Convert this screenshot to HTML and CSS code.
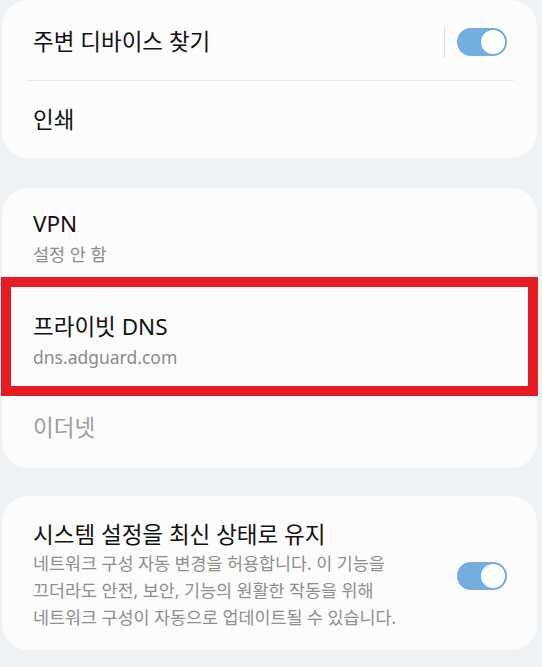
FILE: index.html
```html
<!DOCTYPE html>
<html lang="ko">
<head>
  <meta charset="UTF-8" />
  <meta name="viewport" content="width=device-width, initial-scale=1.0" />
  <title>연결 설정</title>
  <link rel="stylesheet" href="styles.css">
</head>
<body>
  <main class="page">
    <section class="card">
      <div class="row row-first">
        <div class="row-text">
          <p class="title">주변 디바이스 찾기</p>
        </div>
        <span class="vsep"></span>
        <span class="switch on"><span class="knob"></span></span>
      </div>
      <div class="divider"></div>
      <div class="row row-print">
        <div class="row-text">
          <p class="title">인쇄</p>
        </div>
      </div>
    </section>

    <section class="card">
      <div class="row row-vpn">
        <div class="row-text">
          <p class="title">VPN</p>
          <p class="sub">설정 안 함</p>
        </div>
      </div>
      <!-- 강조 표시된 항목 -->
      <div class="row row-dns highlight">
        <div class="row-text">
          <p class="title">프라이빗 DNS</p>
          <p class="sub">dns.adguard.com</p>
        </div>
      </div>
      <div class="row row-eth">
        <div class="row-text">
          <p class="title disabled">이더넷</p>
        </div>
      </div>
    </section>

    <section class="card">
      <div class="row row-keep">
        <div class="row-text">
          <p class="title">시스템 설정을 최신 상태로 유지</p>
          <p class="desc">네트워크 구성 자동 변경을 허용합니다. 이 기능을<br>끄더라도 안전, 보안, 기능의 원활한 작동을 위해<br>네트워크 구성이 자동으로 업데이트될 수 있습니다.</p>
        </div>
        <span class="switch on"><span class="knob"></span></span>
      </div>
    </section>
  </main>
</body>
</html>
```

FILE: styles.css
```css
* { box-sizing: border-box; margin: 0; padding: 0; }

html, body {
  background: #eff2f5;
  font-family: "Noto Sans", "Noto Sans CJK KR", sans-serif;
}

.page {
  display: flex;
  flex-direction: column;
  gap: 30px;
  padding: 0 5px 0 2px;
}

.card {
  background: #fcfcfc;
  border-radius: 26px;
}

.card + .card + .card { margin-top: -2px; }

.row {
  display: flex;
  align-items: center;
  padding: 0 30px 0 31px;
}

.row-text { flex: 1; }

.title {
  font-size: 22.5px;
  line-height: 28px;
  color: #111;
}

.title.disabled { color: #9c9c9c; }

.sub {
  font-size: 17.5px;
  line-height: 24px;
  margin-top: 4px;
  color: #8b8b8b;
}

.desc {
  font-size: 17.4px;
  line-height: 27px;
  color: #8e8e8e;
  margin-top: 1px;
}

.row-first { height: 80px; padding-top: 4px; }
.row-print { height: 77px; }

.divider {
  height: 1px;
  background: #e7e7e7;
  margin: 0 23px 0 25px;
}

.row-vpn { padding-top: 22px; padding-bottom: 11px; }

.highlight {
  border: 10px solid #e61c22;
  margin: 0 -1px;
  padding: 26px 20px 17px 22px;
}

.row-eth { padding-top: 18px; padding-bottom: 26px; }

.row-keep { padding-top: 25px; padding-bottom: 19px; }

.vsep {
  width: 1px;
  height: 31px;
  background: #dcdcdc;
  margin-right: 12px;
}

.switch {
  position: relative;
  width: 50px;
  height: 28px;
  border-radius: 14px;
  background: #cfcfcf;
  flex-shrink: 0;
}

.switch.on { background: #74ade0; }

.switch .knob {
  position: absolute;
  top: 2px;
  left: 2px;
  width: 24px;
  height: 24px;
  border-radius: 50%;
  background: #fff;
}

.switch.on .knob { left: 24px; }
```
